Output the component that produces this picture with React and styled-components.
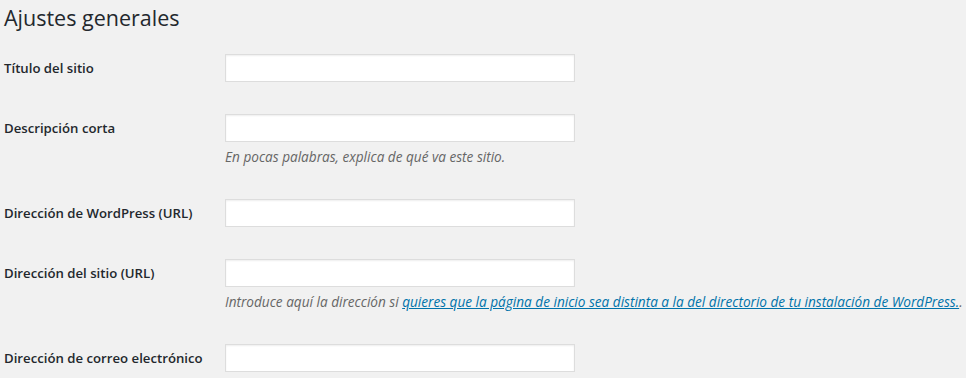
import styled, { createGlobalStyle } from "styled-components";

const Global = createGlobalStyle`
    body {
        margin: 0;
        background: #f1f1f1;
        font-family: "Open Sans", "Noto Sans", sans-serif;
        color: #23282d;
    }
`

const fields = [
    { label: "Título del sitio" },
    { label: "Descripción corta", help: "En pocas palabras, explica de qué va este sitio." },
    { label: "Dirección de WordPress (URL)" },
    {
        label: "Dirección del sitio (URL)",
        help: "Introduce aquí la dirección si ",
        link: "quieres que la página de inicio sea distinta a la del directorio de tu instalación de WordPress.",
        after: ".",
    },
    { label: "Dirección de correo electrónico" },
]

export default function App() {
    return (
        <>
            <Global />
            <Wrap>
                <Title>Ajustes generales</Title>
                {fields.map(f => (
                    <Row key={f.label}>
                        <Label>{f.label}</Label>
                        <Field>
                            <Input type="text" />
                            {f.help && (
                                <Help>
                                    {f.help}
                                    {f.link && <a href="#">{f.link}</a>}
                                    {f.after}
                                </Help>
                            )}
                        </Field>
                    </Row>
                ))}
            </Wrap>
        </>
    )
}

const Wrap = styled.div`
    padding-left: 4px;
`

const Title = styled.h1`
    margin: 0;
    height: 38px;
    font-size: 21.5px;
    font-weight: 400;
    line-height: 36px;
    color: #23282d;
`

const Row = styled.div`
    display: flex;
    padding: 16px 0;
`

const Label = styled.div`
    width: 221px;
    flex-shrink: 0;
    font-size: 13.2px;
    font-weight: 600;
    line-height: 28px;
    color: #23282d;
`

const Field = styled.div`
    display: flex;
    flex-direction: column;
`

const Input = styled.input`
    width: 350px;
    height: 28px;
    box-sizing: border-box;
    margin: 0;
    border: 1px solid #ddd;
    background: #fff;
    box-shadow: inset 0 1px 2px rgba(0, 0, 0, 0.07);
    outline: none;
`

const Help = styled.p`
    margin: 4px 0 0;
    font-size: 13.6px;
    font-style: italic;
    line-height: 21px;
    color: #666;
    white-space: nowrap;

    a {
        color: #0073aa;
        text-decoration: underline;
    }
`
